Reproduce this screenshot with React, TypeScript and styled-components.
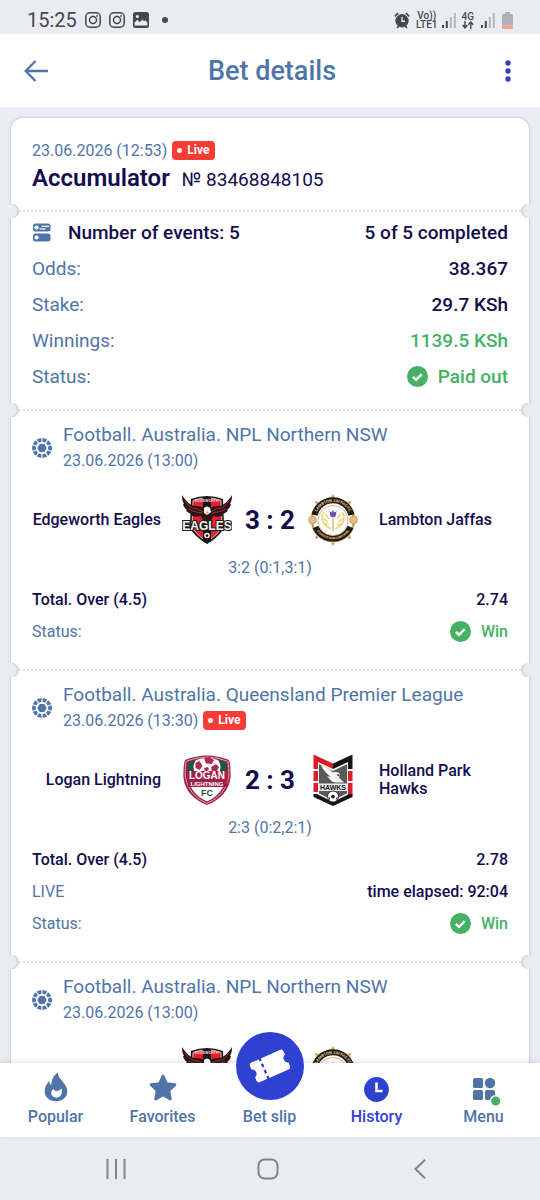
import React from 'react';
import styled, { createGlobalStyle, css } from 'styled-components';

const color = {
  page: '#e9edf3',
  steel: '#4f75a8',
  navy: '#130c4e',
  blue: '#2e41d1',
  green: '#45b164',
  red: '#fb3b35',
  system: '#46484c',
};

const GlobalStyle = createGlobalStyle`
  * { box-sizing: border-box; }
  body {
    margin: 0;
    background: ${color.page};
    font-family: Roboto, 'Liberation Sans', sans-serif;
    color: ${color.navy};
  }
  h1, h2, h3, p, dl, dt, dd { margin: 0; font-weight: inherit; font-size: inherit; }
  button { border: 0; background: none; padding: 0; font: inherit; color: inherit; cursor: pointer; }
  a { color: inherit; text-decoration: none; }
  svg { display: block; flex: none; }
`;

const Screen = styled.div`
  display: flex;
  flex-direction: column;
  height: 100vh;
`;

const StatusBar = styled.div`
  display: flex;
  align-items: center;
  justify-content: space-between;
  flex: none;
  height: 34px;
  padding: 6px 27px 0;
  color: ${color.system};
`;

const StatusGroup = styled.div<{ $gap: number }>`
  display: flex;
  align-items: center;
  gap: ${(p) => p.$gap}px;
`;

const Clock = styled.span`
  font-size: 20px;
  line-height: 24px;
`;

const Header = styled.header`
  display: flex;
  align-items: center;
  justify-content: space-between;
  flex: none;
  height: 73px;
  padding: 0 16px 0 20px;
  background: #fff;
`;

const HeaderButton = styled.button`
  display: flex;
  align-items: center;
  justify-content: center;
  width: 32px;
  height: 40px;
`;

const PageTitle = styled.h1`
  && { font-size: 27px; font-weight: 500; }
  line-height: 32px;
  color: ${color.steel};
`;

const Content = styled.main`
  flex: 1;
  min-height: 0;
  overflow: hidden;
  padding: 11px 11px 0;
`;

const Coupon = styled.article`
  background: #fff;
  border-radius: 12px 12px 0 0;
  box-shadow: 0 0 3px rgba(60, 70, 90, 0.35);
`;

const notch = css`
  content: '';
  position: absolute;
  top: -6px;
  width: 14px;
  height: 14px;
  border-radius: 50%;
  background: ${color.page};
`;

const Section = styled.section<{ $top: number; $bottom: number }>`
  position: relative;
  padding: ${(p) => p.$top}px 21px ${(p) => p.$bottom}px;

  section + & {
    background: repeating-linear-gradient(90deg, #dde2ed 0 2px, transparent 2px 4px) 8px 0 / calc(100% - 16px) 2px
      no-repeat;
  }
  section + &::before {
    ${notch}
    left: -6px;
    box-shadow: inset -2px 0 1px #d3d7de;
  }
  section + &::after {
    ${notch}
    right: -6px;
    box-shadow: inset 2px 0 1px #d3d7de;
  }
`;

const DateLine = styled.p`
  display: flex;
  align-items: center;
  gap: 5px;
  font-size: 16px;
  line-height: 26px;
  color: ${color.steel};
`;

const LiveTag = styled.span`
  display: flex;
  align-items: center;
  gap: 5px;
  height: 19px;
  margin-bottom: 2px;
  padding: 0 6px 0 5px;
  border-radius: 4px;
  background: ${color.red};
  color: #fff;
  font-size: 12px;
  font-weight: 700;

  &::before {
    content: '';
    width: 5px;
    height: 5px;
    border-radius: 50%;
    background: #fff;
  }
`;

const CouponTitle = styled.h2`
  display: flex;
  align-items: baseline;
  gap: 12px;
  line-height: 28px;
`;

const CouponType = styled.span`
  font-size: 24px;
  font-weight: 600;
`;

const CouponNumber = styled.span`
  font-size: 19px;
`;

const Rows = styled.dl``;

const Row = styled.div<{ $size: 'large' | 'small' }>`
  display: flex;
  align-items: center;
  justify-content: space-between;
  ${(p) =>
    p.$size === 'large'
      ? css`
          height: 36px;
          font-size: 19px;
        `
      : css`
          height: 32px;
          font-size: 16px;
        `}
`;

const Term = styled.dt<{ $strong?: boolean }>`
  display: flex;
  align-items: center;
  gap: 17px;
  color: ${(p) => (p.$strong ? color.navy : color.steel)};
  && { font-weight: ${(p) => (p.$strong ? 500 : 400)}; }
`;

const Value = styled.dd<{ $positive?: boolean }>`
  display: flex;
  align-items: center;
  gap: 10px;
  && { font-weight: 500; }
  color: ${(p) => (p.$positive ? color.green : color.navy)};
`;

const EventHead = styled.header`
  display: flex;
  align-items: center;
  gap: 11px;
`;

const League = styled.h3`
  && { font-size: 19px; }
  line-height: 26px;
  color: ${color.steel};
`;

const Match = styled.div`
  display: grid;
  grid-template-columns: 1fr 50px 76px 50px 1fr;
  align-items: center;
  margin-top: 19px;
  height: 54px;
`;

const Team = styled.p<{ $side: 'home' | 'away' }>`
  font-size: 16px;
  font-weight: 500;
  line-height: 18px;
  ${(p) => (p.$side === 'home' ? 'text-align: right; padding-right: 21px;' : 'padding-left: 21px;')}
`;

const Score = styled.p`
  text-align: center;
  font-size: 26px;
  line-height: 30px;
  font-weight: 700;
`;

const Periods = styled.p`
  margin: 11px 0 5px;
  text-align: center;
  font-size: 16px;
  line-height: 20px;
  color: ${color.steel};
`;

const TabBar = styled.nav`
  position: relative;
  display: grid;
  grid-template-columns: repeat(5, 1fr);
  flex: none;
  height: 74px;
  padding: 0 3px 0 2px;
  background: #fff;
  box-shadow: 0 -1px 5px rgba(50, 60, 90, 0.18);
`;

const Tab = styled.a<{ $active?: boolean }>`
  position: relative;
  display: flex;
  flex-direction: column;
  align-items: center;
  justify-content: flex-end;
  padding-bottom: 10px;
  gap: 5px;
  font-size: 16px;
  line-height: 20px;
  font-weight: 500;
  color: ${(p) => (p.$active ? color.blue : color.steel)};
`;

const SlipDisc = styled.span`
  position: absolute;
  top: -31px;
  display: flex;
  align-items: center;
  justify-content: center;
  width: 68px;
  height: 68px;
  border-radius: 50%;
  background: ${color.blue};
`;

const SystemNav = styled.div`
  display: flex;
  align-items: center;
  justify-content: space-around;
  flex: none;
  height: 63px;
  padding: 0 44px 0 40px;
`;

const SystemButton = styled.button`
  display: flex;
  justify-content: center;
  width: 40px;
`;

/* ---------- icons ---------- */

const CameraIcon = () => (
  <svg width="16" height="16" viewBox="0 0 16 16" fill="none" stroke="currentColor" strokeWidth="1.5">
    <rect x="0.8" y="0.8" width="14.4" height="14.4" rx="4" />
    <circle cx="8" cy="8" r="3.5" />
    <circle cx="12" cy="4" r="0.6" fill="currentColor" strokeWidth="0.6" />
  </svg>
);

const PhotoIcon = () => (
  <svg width="16" height="16" viewBox="0 0 16 16">
    <rect width="16" height="16" rx="2.5" fill="currentColor" />
    <circle cx="4.4" cy="4.6" r="1.5" fill={color.page} />
    <path d="M1.6 13.4v-3l2.8-2.6 2.4 2.4 2.6-2.8 1.6 1.8 1.4-1 2 2.2v3z" fill={color.page} />
  </svg>
);

const AlarmIcon = () => (
  <svg width="16" height="17" viewBox="0 0 16 17" fill="none" stroke="currentColor">
    <circle cx="8" cy="8.8" r="6.2" fill="currentColor" />
    <path d="M.9 4.4 4.1 1.2M15.1 4.4l-3.2-3.2M3 16l1.8-2M13 16l-1.8-2" strokeWidth="1.8" />
    <path d="M8 5v4.2h3" stroke={color.page} strokeWidth="1.4" />
  </svg>
);

const CarrierText = styled.span`
  display: flex;
  flex-direction: column;
  align-items: center;
  font-size: 10px;
  line-height: 9px;
  font-weight: 500;
`;

const SignalIcon = () => (
  <svg width="14" height="15" viewBox="0 0 14 15">
    <path d="M0 12h2v3H0zM3.8 8h2v7h-2z" fill="currentColor" />
    <path d="M7.8 4h2v11h-2zM11.8 0h2v15h-2z" fill="#b3b6ba" />
  </svg>
);

const DataArrows = () => (
  <svg width="12" height="8" viewBox="0 0 12 8" fill="none" stroke="currentColor" strokeWidth="1.4">
    <path d="M3 0v6.6M.6 4 3 6.8 5.4 4M8.8 8V1M6.4 3.8 8.8 1l2.4 2.8" />
  </svg>
);

const BatteryIcon = () => (
  <svg width="11" height="17" viewBox="0 0 11 17">
    <path d="M3 0h5v2h1.5A1.5 1.5 0 0 1 11 3.5V13H0V3.5A1.5 1.5 0 0 1 1.5 2H3z" fill="#aeb1b5" />
    <path d="M0 13.2h11v2.3a1.5 1.5 0 0 1-1.5 1.5h-8A1.5 1.5 0 0 1 0 15.5z" fill="#f2a08c" />
  </svg>
);

const BackArrow = () => (
  <svg width="24" height="22" viewBox="0 0 24 22" fill="none" stroke={color.steel} strokeWidth="2.3">
    <path d="M11.5 1 1.7 11l9.8 10M1.7 11H24" />
  </svg>
);

const MoreIcon = () => (
  <svg width="6" height="22" viewBox="0 0 6 22" fill="#303fc0">
    <circle cx="3" cy="3" r="2.7" />
    <circle cx="3" cy="11" r="2.7" />
    <circle cx="3" cy="19" r="2.7" />
  </svg>
);

const EventsIcon = () => (
  <svg width="19" height="19" viewBox="0 0 19 19">
    <rect x="1" y=".5" width="17.5" height="8" rx="2.5" fill={color.steel} />
    <circle cx="4.6" cy="4.5" r="2.1" fill="#fff" />
    <path d="M9.5 3.3H17M7.5 5.9h6" stroke="#fff" strokeWidth="1.2" />
    <rect x="1" y="10.5" width="17.5" height="8" rx="2.5" fill={color.steel} />
    <circle cx="4.6" cy="14.5" r="2.1" fill="#fff" />
  </svg>
);

const CheckIcon = () => (
  <svg width="21" height="21" viewBox="0 0 21 21">
    <circle cx="10.5" cy="10.5" r="10.5" fill={color.green} />
    <path d="m5.9 10.9 3.1 3 5.8-5.8" fill="none" stroke="#fff" strokeWidth="2.4" />
  </svg>
);

const BallIcon = () => (
  <svg width="20" height="20" viewBox="0 0 20 20">
    <circle cx="10" cy="10" r="8.1" fill="none" stroke={color.steel} strokeWidth="3.8" />
    <path
      d="M10 0v5M10 15v5M0 6.4l5 1.8M0 13.6l5-1.8M20 6.4l-5 1.8M20 13.6l-5-1.8M4.2 1.6l2.8 4.400M15.800 1.600l-2.800 4.400M4.200 18.400l2.800-4.400M15.800 18.400l-2.800-4.400"
      stroke="#fff"
      strokeWidth="1.1"
    />
    <path d="M7.500 5.500h5l2.700 4.500-2.700 4.500h-5L4.800 10z" fill={color.steel} stroke="#fff" strokeWidth=".9" />
  </svg>
);

const FlameIcon = () => (
  <svg width="24" height="30" viewBox="0 0 24 30">
    <path
      d="M13.8.8c.5 4.7 3.7 7 6.2 10.4 1.7 2.3 3.3 4.8 3.3 8.2 0 5.6-4.9 9.8-11.3 9.8S.7 25.1.7 19.4c0-4.4 2-7.7 4.4-10.4.2 1.8.8 3.2 2.3 4C7.3 8 9.5 3.5 13.8.8z"
      fill={color.steel}
    />
    <path d="M17.7 16.5c1 5.2-1.3 9.2-5.4 9.2-2.8 0-5-1.9-5-4.6 0-2 .9-3.4 2.4-4.4.2 1.3.9 2.2 2.2 2.3 2.3.1 4.3-.8 5.800-2.500z" fill="#fff" />
  </svg>
);

const StarIcon = () => (
  <svg width="28" height="28" viewBox="0 0 28 28">
    <path
      d="m14 2 3.5 7.7 8.5 1-6.2 5.8 1.5 8.5L14 20.9 6.700 25l1.500-8.500L2 10.700l8.500-1z"
      fill={color.steel}
      stroke={color.steel}
      strokeWidth="2.8"
      strokeLinejoin="round"
    />
  </svg>
);

const TicketIcon = () => (
  <svg width="44" height="40" viewBox="0 0 44 40">
    <g transform="rotate(-24 22 20)">
      <path
        d="M6.5 9.3h31a2.8 2.8 0 0 1 2.8 2.8v3.6a4.5 4.5 0 0 0 0 8.6v3.6a2.8 2.8 0 0 1-2.8 2.8h-31a2.8 2.8 0 0 1-2.8-2.8v-3.6a4.5 4.5 0 0 0 0-8.6v-3.6a2.8 2.8 0 0 1 2.8-2.800z"
        fill="#fff"
      />
      <path d="M15.5 8v24" stroke={color.blue} strokeWidth="2.3" strokeDasharray="3.6 3.1" />
    </g>
  </svg>
);

const HistoryIcon = () => (
  <svg width="25" height="25" viewBox="0 0 25 25">
    <circle cx="12.5" cy="12.5" r="12.4" fill={color.blue} />
    <path d="M12.5 5.5V14h6" fill="none" stroke="#fff" strokeWidth="2.6" />
  </svg>
);

const MenuIcon = () => (
  <svg width="28" height="24" viewBox="0 0 28 24" overflow="visible">
    <g fill={color.steel}>
      <rect x="3" y="0" width="10" height="10" rx="1.5" />
      <circle cx="20" cy="5" r="5.2" />
      <rect x="3" y="12" width="10" height="10" rx="1.5" />
      <rect x="15" y="12" width="10" height="10" rx="1.5" />
    </g>
    <circle cx="25.7" cy="23" r="6" fill="#fff" />
    <circle cx="25.7" cy="23" r="4.5" fill={color.green} />
  </svg>
);

const RecentsIcon = () => (
  <svg width="20" height="20" viewBox="0 0 20 20" stroke="#818589" strokeWidth="2">
    <path d="M1.5 0v20M10 0v20M18.5 0v20" />
  </svg>
);

const HomeIcon = () => (
  <svg width="22" height="22" viewBox="0 0 22 22" fill="none" stroke="#818589" strokeWidth="2">
    <rect x="1.5" y="1.5" width="19" height="19" rx="6" />
  </svg>
);

const ChevronIcon = () => (
  <svg width="12" height="20" viewBox="0 0 12 20" fill="none" stroke="#818589" strokeWidth="2">
    <path d="M11 .8 1.5 10l9.5 9.2" />
  </svg>
);

/* ---------- club crests ---------- */

const crestFont = "'Liberation Sans', sans-serif";

const EaglesCrest = () => (
  <svg width="50" height="52" viewBox="0 0 50 52">
    <path d="M9 5Q25-1 41 5l1 27q-2 9-17 18Q10 41 8 32z" fill="#161416" />
    <path d="M11 6.5Q25 1 39 6.5l1 25q-2 8-15 16-13-8-15-16z" fill="#e3222c" stroke="#fff" strokeWidth=".7" />
    <path d="M21 3h8v44l-4 2-4-2z" fill="#161416" />
    <text x="25" y="8" fontSize="4" fontWeight="700" fill="#f4c9cb" textAnchor="middle">EDGEWORTH</text>
    <path d="M25 16c-3-3-7-4-11-4C8 12 4 7 0 1c0 5 1 7 2 9l-1 .5c1 3 2 4 4 5.5l-1 .8c2 2 4 3 6 3.2l-.5 1.500c3 1.500 6 1.500 9 .5l3 5h7l3-5c3 1 6 1 9-.5L40 20c2-.2 4-1.200 6-3.200l-1-.8c2-1.500 3-2.500 4-5.500L48 10c1-2 2-4 2-9-4 6-8 11-14 11-4 0-8 1-11 4z" fill="#2a1416" />
    <path d="M3 7c4 6 8 8 13 8l5 3M47 7c-4 6-8 8-13 8l-5 3M7 15c4 3 8 3 13 4M43 15c-4 3-8 3-13 4" fill="none" stroke="#b02a30" strokeWidth="1" />
    <path d="M22 14q3-3 6 0l1 4-4 3-3-2z" fill="#fff" />
    <path d="m24 17 3 1-2 3z" fill="#e9a23b" />
    <text x="25" y="36" fontSize="12" fontWeight="700" fill="#f5f5f5" stroke="#1b191b" strokeWidth="2.2" paintOrder="stroke" textAnchor="middle" fontFamily={crestFont}>EAGLES</text>
    <circle cx="25" cy="41.5" r="2.8" fill="#fff" />
    <path d="m25 40 1.5 1.2-.6 1.6h-1.8l-.6-1.6z" fill="#161416" />
  </svg>
);

const JaffasCrest = ({ id }: { id: string }) => (
  <svg width="50" height="52" viewBox="0 0 50 52">
    <defs>
      <path id={`${id}-top`} d="M7.8 20.5A18 18 0 0 1 42.2 20.5" />
      <path id={`${id}-bottom`} d="M7 34A20 20 0 0 0 43 34" />
    </defs>
    <circle cx="25" cy="26" r="21" fill="#fff" stroke="#c9a25d" strokeWidth="2.6" />
    <path d="m25 0 2 3.5h-4zM25 52l2-3.5h-4zM7 7l4 1-3 3zM43 7l-4 1 3 3zM7 45l4-1-3-3zM43 45l-4-1 3-3z" fill="#c9a25d" />
    <path d="M6.500 21A19 19 0 0 1 43.500 21" fill="none" stroke="#221a12" strokeWidth="6" />
    <path d="M7.500 33A19 19 0 0 0 42.500 33" fill="none" stroke="#221a12" strokeWidth="6" />
    <circle cx="25" cy="26.5" r="15" fill="#fff" stroke="#d2b074" strokeWidth=".9" />
    <text fontSize="4" fontWeight="700" fill="#e5cb94" textAnchor="middle">
      <textPath href={`#${id}-top`} startOffset="50%">LAMBTON JAFFAS FC</textPath>
    </text>
    <text fontSize="3" fontWeight="700" fill="#e5cb94" textAnchor="middle">
      <textPath href={`#${id}-bottom`} startOffset="50%">COURAGE NON CONFORMS</textPath>
    </text>
    <circle cx="4.5" cy="26" r="3.8" fill="#e9bd8c" stroke="#c99a5d" />
    <circle cx="45.5" cy="26" r="3.8" fill="#e9bd8c" stroke="#c99a5d" />
    <path d="M16 18c-4 5-2 13 7 17M34 18c4 5 2 13-7 17M14 24l6 4M36 24l-6 4M15 29l6 2M35 29l-6 2M17 20l4 5M33 20l-4 5" fill="none" stroke="#ead98a" strokeWidth="1.8" />
    <path d="M25 24v13" stroke="#c3ad4e" strokeWidth="1.2" />
    <path d="m21.5 17 2 1.5L25 16l1.5 2.5 2-1.5-.8 5q-2.7 2.5-5.4 0z" fill="#6b4fa8" />
  </svg>
);

const LoganCrest = () => (
  <svg width="50" height="52" viewBox="0 0 50 52">
    <path d="M3 6Q25-3 47 6q2 6 1.5 18-3 19-23.5 27Q4 43 1.5 24 1 12 3 6z" fill="#a31f46" />
    <path d="M4.3 7.2Q25-1 45.7 7.2q1.600 6 .9 16.500Q43 42 25 49.500 7 42 3.400 23.700q-.7-10.500.9-16.500z" fill="none" stroke="#f3dfe5" strokeWidth=".7" />
    <path d="M5.500 22h39Q42 40 25 47.500 8 40 5.500 22z" fill="#fff" />
    <path d="M6 8.700Q25 1 44 8.700q1.300 6 .8 13H5.200Q4.700 14 6 8.700z" fill="#155a42" />
    <path d="M14 6q11-4 22 0 5 7 0 15H14q-5-8 0-15z" fill="#fff" />
    <path d="m22 4 5-1 5 3-2 4-6-.5zM13.500 9l4-2 3 5-3 4-4-2zM29 13l5-3 3 3-2 4-5 1zM22 14l4-1 1 3-4 2z" fill="#b12a50" />
    <path d="M4 17h42l-1 16H6z" fill="#a31f46" />
    <text x="25" y="24.5" fontSize="10" fontWeight="700" fill="#fff" textAnchor="middle" fontFamily={crestFont}>LOGAN</text>
    <text x="25" y="32" fontSize="6" fontWeight="700" fill="#fff" textAnchor="middle" fontFamily={crestFont}>LIGHTNING</text>
    <text x="25" y="42" fontSize="9" fontWeight="700" fill="#155a42" textAnchor="middle" fontFamily={crestFont}>FC</text>
  </svg>
);

const HawksCrest = () => (
  <svg width="50" height="52" viewBox="0 0 50 52">
    <path d="m5.5.5 19.500 9V15L10 8v7H5.500zM5.500 17H10v10H5.500zM5.500 29H10v9H5.500z" fill="#d8202c" />
    <path d="m44.500.5-19.500 9V15l15-7v7h4.500z" fill="#151515" />
    <path d="M40 17h4.500v10H40zM40 29h4.500v12H40z" fill="#d8202c" />
    <path d="M5.500 40H9l16 8 16-8h3.500v3L25 52 5.500 43z" fill="#151515" />
    <path d="m10.500 9.500 14.500 7 14.500-7v30L25 47l-14.500-7.500z" fill="#59595b" stroke="#fff" strokeWidth=".8" />
    <path d="M13 11.500c5 1 9 4 12 7 3-1 6-.5 7 2l-1 3 5 5h-8c-5 0-6-4-9-6 2 0 3 0 4 .5-4-3-7-6-10-11.500z" fill="#f6f6f6" />
    <path d="m29 20 3 1-2 1.500z" fill="#222" />
    <rect x="10" y="29.5" width="30" height="7.5" fill="#ededed" />
    <text x="25" y="35.8" fontSize="7" fontWeight="700" fill="#151515" textAnchor="middle" fontFamily={crestFont}>HAWKS</text>
    <circle cx="25" cy="42.5" r="5.5" fill="#fff" stroke="#151515" strokeWidth=".8" />
    <path d="m25 40.500 2 1.500-.8 2.300h-2.400L23 42zM20 43l2 1-.5 2zM30 43l-2 1 .5 2z" fill="#151515" />
  </svg>
);

/* ---------- events ---------- */

type EventProps = {
  league: string;
  date: string;
  live?: boolean;
  home: string;
  away: string;
  homeCrest: React.ReactNode;
  awayCrest: React.ReactNode;
  score: string;
  periods: string;
  odds: string;
  elapsed?: string;
};

const EventSection = (e: EventProps) => (
  <Section $top={13} $bottom={22}>
    <EventHead>
      <BallIcon />
      <div>
        <League>{e.league}</League>
        <DateLine>
          {e.date}
          {e.live && <LiveTag>Live</LiveTag>}
        </DateLine>
      </div>
    </EventHead>
    <Match>
      <Team $side="home">{e.home}</Team>
      {e.homeCrest}
      <Score>{e.score}</Score>
      {e.awayCrest}
      <Team $side="away">{e.away}</Team>
    </Match>
    <Periods>{e.periods}</Periods>
    <Rows>
      <Row $size="small">
        <Term $strong>Total. Over (4.5)</Term>
        <Value>{e.odds}</Value>
      </Row>
      {e.elapsed && (
        <Row $size="small">
          <Term>LIVE</Term>
          <Value>time elapsed: {e.elapsed}</Value>
        </Row>
      )}
      <Row $size="small">
        <Term>Status:</Term>
        <Value $positive>
          <CheckIcon />
          Win
        </Value>
      </Row>
    </Rows>
  </Section>
);

export default function App() {
  return (
    <Screen>
      <GlobalStyle />
      <StatusBar>
        <StatusGroup $gap={8}>
          <Clock>15:25</Clock>
          <CameraIcon />
          <CameraIcon />
          <PhotoIcon />
          <svg width="22" height="6" viewBox="0 0 22 6">
            <circle cx="8" cy="3" r="3" fill="currentColor" />
          </svg>
        </StatusGroup>
        <StatusGroup $gap={6}>
          <AlarmIcon />
          <StatusGroup $gap={4}>
            <CarrierText>
              <span>Vo))</span>
              <span>LTE1</span>
            </CarrierText>
            <SignalIcon />
          </StatusGroup>
          <StatusGroup $gap={7}>
            <CarrierText>
              <span>4G</span>
              <DataArrows />
            </CarrierText>
            <SignalIcon />
            <BatteryIcon />
          </StatusGroup>
        </StatusGroup>
      </StatusBar>
      <Header>
        <HeaderButton aria-label="Back">
          <BackArrow />
        </HeaderButton>
        <PageTitle>Bet details</PageTitle>
        <HeaderButton aria-label="More options">
          <MoreIcon />
        </HeaderButton>
      </Header>
      <Content>
        <Coupon>
          <Section $top={20} $bottom={16}>
            <DateLine>
              23.06.2026 (12:53)
              <LiveTag>Live</LiveTag>
            </DateLine>
            <CouponTitle>
              <CouponType>Accumulator</CouponType>
              <CouponNumber>№ 83468848105</CouponNumber>
            </CouponTitle>
          </Section>
          <Section $top={4} $bottom={15}>
            <Rows>
              <Row $size="large">
                <Term $strong>
                  <EventsIcon />
                  Number of events: 5
                </Term>
                <Value>5 of 5 completed</Value>
              </Row>
              <Row $size="large">
                <Term>Odds:</Term>
                <Value>38.367</Value>
              </Row>
              <Row $size="large">
                <Term>Stake:</Term>
                <Value>29.7 KSh</Value>
              </Row>
              <Row $size="large">
                <Term>Winnings:</Term>
                <Value $positive>1139.5 KSh</Value>
              </Row>
              <Row $size="large">
                <Term>Status:</Term>
                <Value $positive>
                  <CheckIcon />
                  Paid out
                </Value>
              </Row>
            </Rows>
          </Section>
          <EventSection
            league="Football. Australia. NPL Northern NSW"
            date="23.06.2026 (13:00)"
            home="Edgeworth Eagles"
            away="Lambton Jaffas"
            homeCrest={<EaglesCrest />}
            awayCrest={<JaffasCrest id="jaffas-a" />}
            score="3 : 2"
            periods="3:2 (0:1,3:1)"
            odds="2.74"
          />
          <EventSection
            league="Football. Australia. Queensland Premier League"
            date="23.06.2026 (13:30)"
            live
            home="Logan Lightning"
            away="Holland Park Hawks"
            homeCrest={<LoganCrest />}
            awayCrest={<HawksCrest />}
            score="2 : 3"
            periods="2:3 (0:2,2:1)"
            odds="2.78"
            elapsed="92:04"
          />
          <Section $top={13} $bottom={22}>
            <EventHead>
              <BallIcon />
              <div>
                <League>Football. Australia. NPL Northern NSW</League>
                <DateLine>23.06.2026 (13:00)</DateLine>
              </div>
            </EventHead>
            <Match>
              <span />
              <EaglesCrest />
              <span />
              <JaffasCrest id="jaffas-b" />
            </Match>
          </Section>
        </Coupon>
      </Content>
      <TabBar>
        <Tab href="#popular">
          <FlameIcon />
          Popular
        </Tab>
        <Tab href="#favorites">
          <StarIcon />
          Favorites
        </Tab>
        <Tab href="#bet-slip">
          <SlipDisc>
            <TicketIcon />
          </SlipDisc>
          Bet slip
        </Tab>
        <Tab href="#history" $active>
          <HistoryIcon />
          History
        </Tab>
        <Tab href="#menu">
          <MenuIcon />
          Menu
        </Tab>
      </TabBar>
      <SystemNav>
        <SystemButton aria-label="Recent apps">
          <RecentsIcon />
        </SystemButton>
        <SystemButton aria-label="Home">
          <HomeIcon />
        </SystemButton>
        <SystemButton aria-label="Go back">
          <ChevronIcon />
        </SystemButton>
      </SystemNav>
    </Screen>
  );
}
